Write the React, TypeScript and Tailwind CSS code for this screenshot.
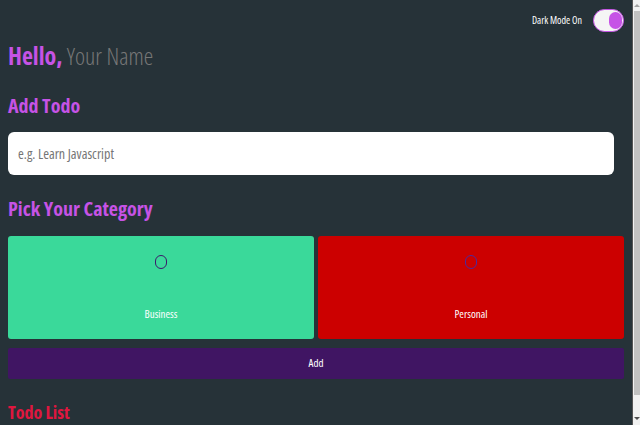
import React, { useState } from 'react';

const categories = [
  { name: 'business', label: 'Business', bg: 'bg-[#3ad99a]', ring: 'border-[#3b1a6b]' },
  { name: 'personal', label: 'Personal', bg: 'bg-[#cc0000]', ring: 'border-[#4b2a9e]' },
];

const App = () => {
  const [category, setCategory] = useState('');
  const [todo, setTodo] = useState('');

  return (
    <div className="flex h-screen bg-[#263238] font-['Open_Sans',sans-serif] font-stretch-condensed">
      <div className="flex-1 overflow-y-auto px-2 pb-[60px] [scrollbar-width:none]">
        <div className="flex items-center justify-end gap-[11px] pt-[9px]">
          <span className="text-[10px] text-white">Dark Mode On</span>
          <div className="flex h-[23px] w-[31px] items-center justify-end rounded-full border border-[#c653e6] bg-[#f5f5f5] pr-[1px]">
            <div className="h-[17px] w-[13px] rounded-full bg-[#c653e6]" />
          </div>
        </div>

        <h1 className="mt-[8px] text-[24px] leading-[32px]">
          <span className="font-bold text-[#c653e6]">Hello,</span>{' '}
          <span className="font-light text-[#777]">Your Name</span>
        </h1>

        <h2 className="mt-[21px] text-[20px] font-bold leading-[26px] text-[#c653e6]">Add Todo</h2>
        <input
          value={todo}
          onChange={(e) => setTodo(e.target.value)}
          placeholder="e.g. Learn Javascript"
          className="mt-[13px] block h-[43px] w-[606px] rounded-md bg-white px-[10px] text-[14px] text-[#333] outline-none placeholder:text-[#757575]"
        />

        <h2 className="mt-[21px] text-[20px] font-bold leading-[26px] text-[#c653e6]">Pick Your Category</h2>
        <div className="mt-[14px] grid grid-cols-2 gap-1">
          {categories.map((c) => (
            <label
              key={c.name}
              onClick={() => setCategory(c.name)}
              className={`flex h-[103px] cursor-pointer flex-col items-center rounded-[3px] ${c.bg}`}
            >
              <span className={`mt-[19px] h-[14px] w-[12px] rounded-full border-[1.5px] ${c.ring} ${category === c.name ? 'bg-white' : ''}`} />
              <span className="mt-[37px] text-[11px] text-white">{c.label}</span>
            </label>
          ))}
        </div>
        <button className="mt-[9px] block h-[31px] w-full rounded-[2px] bg-[#401563] text-[11px] text-white">
          Add
        </button>

        <h2 className="mt-[20px] text-[18px] font-bold leading-[26px] text-[#e0163f]">Todo List</h2>
      </div>

      {/* scrollbar */}
      <div className="flex w-2 flex-col items-center border-l border-[#555] bg-[#f1f1f1]">
        <div className="mt-[4px] h-0 w-0 border-x-[3px] border-b-[3px] border-x-transparent border-b-[#a3a3a3]" />
        <div className="mt-[4px] h-[384px] w-[6px] bg-[#c1c1c1]" />
        <div className="mt-auto mb-[5px] h-0 w-0 border-x-[3px] border-t-[3px] border-x-transparent border-t-[#505050]" />
      </div>
    </div>
  );
};

export default App;
